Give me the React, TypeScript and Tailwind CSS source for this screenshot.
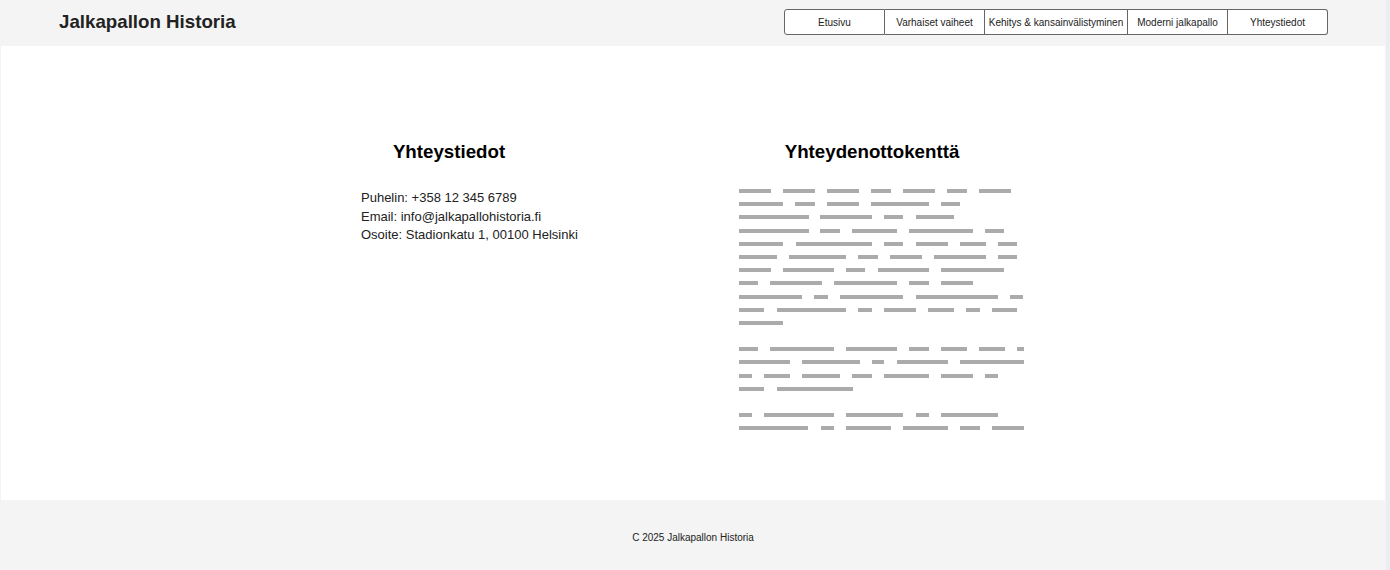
import React from "react";

type Seg = [number, number];

const ORIGIN = 739;

const rows: (Seg[] | null)[] = [
  [[739, 771], [783, 815], [827, 859], [871, 891], [903, 935], [947, 967], [979, 1011]],
  [[739, 783], [795, 815], [827, 859], [871, 929], [941, 960]],
  [[739, 809], [820, 872], [884, 903], [916, 954]],
  [[739, 809], [820, 840], [852, 897], [909, 973], [985, 1004]],
  [[739, 783], [796, 872], [884, 903], [916, 948], [960, 986], [998, 1017]],
  [[739, 777], [789, 846], [858, 878], [890, 922], [934, 986], [998, 1017]],
  [[739, 771], [783, 834], [846, 865], [878, 929], [941, 1004]],
  [[739, 758], [770, 822], [834, 897], [909, 929], [941, 973]],
  [[739, 802], [814, 828], [840, 903], [916, 998], [1010, 1023]],
  [[739, 764], [777, 846], [858, 872], [884, 916], [928, 954], [966, 980], [992, 1017]],
  [[739, 783]],
  null,
  [[739, 758], [770, 834], [846, 897], [909, 929], [941, 967], [979, 1005], [1017, 1024]],
  [[739, 790], [802, 860], [872, 884], [897, 948], [960, 1024]],
  [[739, 752], [764, 790], [802, 840], [852, 872], [884, 929], [941, 973], [985, 998]],
  [[739, 764], [777, 853]],
  null,
  [[739, 752], [764, 834], [846, 903], [916, 929], [941, 998]],
  [[739, 808], [821, 834], [846, 891], [903, 948], [960, 980], [992, 1024]],
];

const navItems: { label: string; cls: string }[] = [
  { label: "Etusivu", cls: "w-[101px] border-l" },
  { label: "Varhaiset vaiheet", cls: "w-[100px]" },
  { label: "Kehitys & kansainvälistyminen", cls: "w-[143px]" },
  { label: "Moderni jalkapallo", cls: "w-[100px]" },
  { label: "Yhteystiedot", cls: "w-[100px]" },
];

function BarRow({ segs }: { segs: Seg[] | null }) {
  if (!segs) return <div className="h-[4px]" />;
  let prev = ORIGIN;
  return (
    <div className="flex h-[4px]">
      {segs.map(([s, e], i) => {
        const ml = s - prev;
        prev = e;
        return (
          <div
            key={i}
            className="h-[4px] bg-[#ababab] shrink-0"
            style={{ marginLeft: ml, width: e - s }}
          />
        );
      })}
    </div>
  );
}

export default function App() {
  return (
    <div className="flex w-[1390px] h-[570px] overflow-hidden font-['Liberation_Sans',Arial,sans-serif] text-[#222]">
      <div className="flex flex-col w-[1386px] bg-[#f4f4f4]">
        <header className="h-[46px] shrink-0 flex items-start justify-between pl-[59px] pr-[58px]">
          <h1 className="mt-[11px] text-[18.72px] leading-[22px] font-bold text-[#222]">
            Jalkapallon Historia
          </h1>
          <nav className="mt-[9px] flex h-[26px]">
            {navItems.map((n, i) => (
              <div
                key={n.label}
                className={`${n.cls} h-[26px] flex items-center justify-center border-y border-r border-[#666] bg-white text-[10px] text-[#222] whitespace-nowrap ${
                  i === 0 ? "rounded-l-[3px]" : ""
                } ${i === navItems.length - 1 ? "rounded-r-[3px]" : ""}`}
              >
                {n.label}
              </div>
            ))}
          </nav>
        </header>

        <main className="h-[454px] shrink-0 mx-[1px] bg-white flex pl-[298px] pt-[95px] gap-[123px]">
          <section className="w-[300px] flex flex-col">
            <h2 className="text-center text-[18.72px] leading-[22px] font-bold text-black">
              Yhteystiedot
            </h2>
            <div className="mt-[26px] pl-[62px] text-[13px] leading-[18.5px] text-[#222]">
              <p>Puhelin: +358 12 345 6789</p>
              <p>Email: info@jalkapallohistoria.fi</p>
              <p>Osoite: Stadionkatu 1, 00100 Helsinki</p>
            </div>
          </section>
          <section className="w-[300px] flex flex-col">
            <h2 className="text-center text-[18.72px] leading-[22px] font-bold text-black">
              Yhteydenottokenttä
            </h2>
            <div className="mt-[26px] pl-[17px] flex flex-col gap-[9.2px]">
              {rows.map((r, i) => (
                <BarRow key={i} segs={r} />
              ))}
            </div>
          </section>
        </main>

        <footer className="flex-1 flex items-center justify-center pt-[4px] text-[10px] text-[#222]">
          C 2025 Jalkapallon Historia
        </footer>
      </div>
      <div className="w-[4px] h-full bg-[#eceef2]" />
    </div>
  );
}
